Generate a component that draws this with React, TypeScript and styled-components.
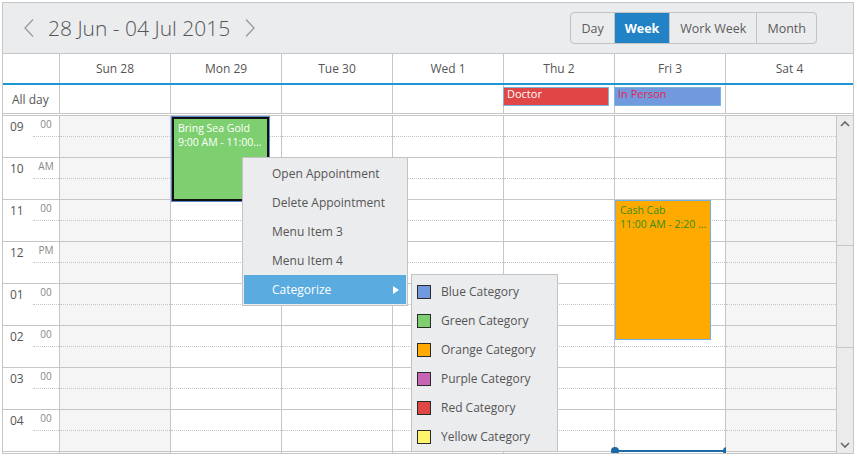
import React from "react";
import styled, { createGlobalStyle } from "styled-components";

const LINE = "#c6c6c6";
const HOUR = 42;

const GlobalStyle = createGlobalStyle`
  html, body { margin: 0; background: #fff; }
  body {
    padding: 2px;
    font-family: "Open Sans", "Noto Sans", "DejaVu Sans", sans-serif;
    color: #555;
  }
  * { box-sizing: border-box; }
`;

const Scheduler = styled.div`
  position: relative;
  width: 852px;
  height: 452px;
  border: 1px solid ${LINE};
  overflow: hidden;
  background: #fff;
`;

const Toolbar = styled.div`
  display: flex;
  align-items: center;
  height: 51px;
  padding: 0 36px 0 21px;
  background: #ebecee;
  border-bottom: 1px solid ${LINE};
`;

const NavArrow = styled.button`
  display: flex;
  align-items: center;
  justify-content: center;
  width: 10px;
  height: 18px;
  padding: 0;
  border: 0;
  background: none;
  cursor: pointer;
`;

const DateTitle = styled.h1`
  margin: 0 15px 0 14px;
  font-size: 21px;
  font-weight: 300;
  line-height: 1;
  color: #555;
`;

const ViewGroup = styled.div`
  display: flex;
  height: 32px;
  margin-left: auto;
  border: 1px solid #c3c3c3;
  border-radius: 4px;
  overflow: hidden;
`;

const ViewButton = styled.button<{ $active?: boolean }>`
  padding: 0 10px;
  border: 0;
  border-left: 1px solid #c3c3c3;
  background: ${(p) => (p.$active ? "#2182c6" : "transparent")};
  color: ${(p) => (p.$active ? "#fff" : "#5b5b5b")};
  font-family: inherit;
  font-size: 12.5px;
  font-weight: ${(p) => (p.$active ? 700 : 400)};
  cursor: pointer;

  &:first-child {
    border-left: 0;
  }
`;

const HeaderRow = styled.div`
  display: grid;
  grid-template-columns: 57px repeat(6, 111px) 1fr;
  height: 31px;
  border-bottom: 2px solid #1e96d4;
`;

const HeaderCell = styled.div`
  display: flex;
  align-items: center;
  justify-content: center;
  border-right: 1px solid ${LINE};
  font-size: 12px;
  color: #555;

  &:last-child {
    border-right: 0;
  }
`;

const AllDayRow = styled.div`
  display: grid;
  grid-template-columns: 57px repeat(6, 111px) 1fr;
  height: 29px;
  border-bottom: 1px solid ${LINE};
`;

const AllDayCell = styled.div`
  position: relative;
  border-right: 1px solid ${LINE};

  &:last-child {
    border-right: 0;
  }
`;

const AllDayLabel = styled.div`
  display: flex;
  align-items: center;
  padding-left: 9px;
  border-right: 1px solid ${LINE};
  font-size: 12px;
`;

const AllDayEvent = styled.div<{ $bg: string; $fg: string; $width: number }>`
  position: absolute;
  top: 2px;
  left: -1px;
  width: ${(p) => p.$width}px;
  height: 19px;
  padding: 0 3px;
  border: 1px solid #7ab6e3;
  background: ${(p) => p.$bg};
  color: ${(p) => p.$fg};
  font-size: 11px;
  line-height: 12px;
  white-space: nowrap;
  overflow: hidden;
`;

const Body = styled.div`
  display: grid;
  grid-template-columns: 57px repeat(7, 111px) 16px;
  height: 338px;
  margin-top: 1px;
  border-top: 1px solid ${LINE};
  overflow: hidden;
`;

const TimeColumn = styled.div`
  border-right: 1px solid ${LINE};
`;

const TimeSlot = styled.div`
  display: flex;
  height: ${HOUR}px;
  border-bottom: 1px solid ${LINE};
`;

const HourLabel = styled.span`
  width: 30px;
  padding: 3px 0 0 7px;
  font-size: 12px;
  line-height: 16px;
  color: #555;
`;

const MinorLabel = styled.span`
  flex: 1;
  align-self: flex-start;
  height: 21px;
  padding-top: 2px;
  border-bottom: 1px dotted ${LINE};
  text-align: center;
  font-size: 10px;
  line-height: 12px;
  color: #888;
`;

const DayColumn = styled.div<{ $weekend?: boolean }>`
  position: relative;
  background: ${(p) => (p.$weekend ? "#f4f5f4" : "#fff")};
  border-right: 1px solid ${LINE};
`;

const HalfSlot = styled.div<{ $dotted?: boolean }>`
  height: 21px;
  border-bottom: 1px ${(p) => (p.$dotted ? "dotted" : "solid")} ${LINE};
`;

const TimedEvent = styled.div<{ $bg: string; $fg: string; $selected?: boolean }>`
  position: absolute;
  padding: 2px 3px 2px 4px;
  background: ${(p) => p.$bg};
  color: ${(p) => p.$fg};
  border: ${(p) => (p.$selected ? "2px solid #111" : "1px solid #6fb1e2")};
  box-shadow: ${(p) => (p.$selected ? "0 0 0 1px #5b87cc" : "none")};
  font-size: 10.5px;
  line-height: 14px;
  overflow: hidden;
`;

const EventLine = styled.div`
  white-space: nowrap;
  overflow: hidden;
  text-overflow: ellipsis;
`;

const SlotMarker = styled.div`
  position: absolute;
  left: -1px;
  top: 334px;
  width: 113px;
  height: 2px;
  background: #1b6aa6;

  &::before,
  &::after {
    content: "";
    position: absolute;
    top: -3px;
    width: 8px;
    height: 8px;
    border-radius: 50%;
    background: #1b6aa6;
  }
  &::before {
    left: -3px;
  }
  &::after {
    right: -4px;
  }
`;

const ScrollBar = styled.div`
  display: flex;
  flex-direction: column;
  background: #ebebeb;
`;

const ScrollArrow = styled.div`
  display: flex;
  align-items: center;
  justify-content: center;
  height: 16px;
`;

const ScrollTrack = styled.div`
  flex: 1;
`;

const ScrollThumb = styled.div<{ $offset: number; $size: number }>`
  margin-top: ${(p) => p.$offset}px;
  height: ${(p) => p.$size}px;
  border-top: 1px solid ${LINE};
  border-bottom: 1px solid ${LINE};
`;

const ContextMenu = styled.ul`
  position: absolute;
  left: 239px;
  top: 154px;
  width: 166px;
  margin: 0;
  padding: 1px;
  list-style: none;
  background: #ebecee;
  border: 1px solid #c3c3c3;
`;

const MenuItem = styled.li<{ $active?: boolean }>`
  position: relative;
  height: 29px;
  padding-left: 28px;
  line-height: 29px;
  font-size: 12px;
  background: ${(p) => (p.$active ? "#5aabdf" : "transparent")};
  color: ${(p) => (p.$active ? "#fff" : "#555")};
`;

const SubArrow = styled.span`
  position: absolute;
  right: 7px;
  top: 11px;
  width: 0;
  height: 0;
  border-left: 6px solid #fff;
  border-top: 4px solid transparent;
  border-bottom: 4px solid transparent;
`;

const SubMenu = styled.ul`
  position: absolute;
  left: 408px;
  top: 271px;
  width: 147px;
  margin: 0;
  padding: 2px 0 0;
  list-style: none;
  background: #ebecee;
  border: 1px solid #c3c3c3;
`;

const SubItem = styled.li`
  display: flex;
  align-items: center;
  gap: 10px;
  height: 29px;
  padding-left: 5px;
  font-size: 12px;
  color: #555;
`;

const Swatch = styled.span<{ $color: string }>`
  width: 14px;
  height: 14px;
  border: 1px solid #2b2b2b;
  background: ${(p) => p.$color};
`;

const days = [
  { label: "Sun 28", weekend: true },
  { label: "Mon 29" },
  { label: "Tue 30" },
  { label: "Wed 1" },
  { label: "Thu 2" },
  { label: "Fri 3" },
  { label: "Sat 4", weekend: true },
];

const hours = [
  ["09", "00"],
  ["10", "AM"],
  ["11", "00"],
  ["12", "PM"],
  ["01", "00"],
  ["02", "00"],
  ["03", "00"],
  ["04", "00"],
];

const allDay: Record<number, { title: string; bg: string; fg: string; width: number }> = {
  4: { title: "Doctor", bg: "#e04646", fg: "#fff", width: 106 },
  5: { title: "In Person", bg: "#7199de", fg: "#ea1f4e", width: 107 },
};

const timed = [
  {
    day: 1,
    title: "Bring Sea Gold",
    time: "9:00 AM - 11:00 AM",
    start: 9,
    end: 11,
    left: 1,
    width: 97,
    bg: "#7dcf6f",
    fg: "#fff",
    selected: true,
  },
  {
    day: 5,
    title: "Cash Cab",
    time: "11:00 AM - 2:20 PM",
    start: 11,
    end: 14 + 20 / 60,
    left: 0,
    width: 96,
    bg: "#ffaa00",
    fg: "#2f8f1f",
  },
];

const categories = [
  ["Blue Category", "#7199de"],
  ["Green Category", "#7dcf6f"],
  ["Orange Category", "#ffaa00"],
  ["Purple Category", "#c864b4"],
  ["Red Category", "#e04646"],
  ["Yellow Category", "#fff36b"],
];

const Chevron = ({ dir }: { dir: "left" | "right" }) => (
  <svg width="10" height="18" viewBox="0 0 10 18">
    <polyline
      points={dir === "left" ? "9,0.5 1,9 9,17.5" : "1,0.5 9,9 1,17.5"}
      fill="none"
      stroke="#9a9a9a"
      strokeWidth="1.3"
    />
  </svg>
);

const SmallChevron = ({ up }: { up?: boolean }) => (
  <svg width="10" height="6" viewBox="0 0 10 6">
    <polyline
      points={up ? "1,5 5,1 9,5" : "1,1 5,5 9,1"}
      fill="none"
      stroke="#666"
      strokeWidth="1.6"
    />
  </svg>
);

export default function App() {
  const firstHour = 9;
  return (
    <>
      <GlobalStyle />
      <Scheduler>
        <Toolbar>
          <NavArrow aria-label="Previous">
            <Chevron dir="left" />
          </NavArrow>
          <DateTitle>28 Jun - 04 Jul 2015</DateTitle>
          <NavArrow aria-label="Next">
            <Chevron dir="right" />
          </NavArrow>
          <ViewGroup>
            <ViewButton>Day</ViewButton>
            <ViewButton $active>Week</ViewButton>
            <ViewButton>Work Week</ViewButton>
            <ViewButton>Month</ViewButton>
          </ViewGroup>
        </Toolbar>

        <HeaderRow>
          <HeaderCell />
          {days.map((d) => (
            <HeaderCell key={d.label}>{d.label}</HeaderCell>
          ))}
        </HeaderRow>

        <AllDayRow>
          <AllDayLabel>All day</AllDayLabel>
          {days.map((d, i) => (
            <AllDayCell key={d.label}>
              {allDay[i] && (
                <AllDayEvent $bg={allDay[i].bg} $fg={allDay[i].fg} $width={allDay[i].width}>
                  {allDay[i].title}
                </AllDayEvent>
              )}
            </AllDayCell>
          ))}
        </AllDayRow>

        <Body>
          <TimeColumn>
            {hours.map(([h, m]) => (
              <TimeSlot key={h}>
                <HourLabel>{h}</HourLabel>
                <MinorLabel>{m}</MinorLabel>
              </TimeSlot>
            ))}
          </TimeColumn>
          {days.map((d, i) => (
            <DayColumn key={d.label} $weekend={d.weekend}>
              {hours.map(([h]) => (
                <React.Fragment key={h}>
                  <HalfSlot $dotted />
                  <HalfSlot />
                </React.Fragment>
              ))}
              {timed
                .filter((e) => e.day === i)
                .map((e) => (
                  <TimedEvent
                    key={e.title}
                    $bg={e.bg}
                    $fg={e.fg}
                    $selected={e.selected}
                    style={{
                      top: (e.start - firstHour) * HOUR + (e.selected ? 1 : 0),
                      height: (e.end - e.start) * HOUR,
                      left: e.left,
                      width: e.width,
                    }}
                  >
                    <EventLine>{e.title}</EventLine>
                    <EventLine>{e.time}</EventLine>
                  </TimedEvent>
                ))}
              {i === 5 && <SlotMarker />}
            </DayColumn>
          ))}
          <ScrollBar>
            <ScrollArrow>
              <SmallChevron up />
            </ScrollArrow>
            <ScrollTrack>
              <ScrollThumb $offset={113} $size={103} />
            </ScrollTrack>
            <ScrollArrow>
              <SmallChevron />
            </ScrollArrow>
          </ScrollBar>
        </Body>

        <ContextMenu>
          <MenuItem>Open Appointment</MenuItem>
          <MenuItem>Delete Appointment</MenuItem>
          <MenuItem>Menu Item 3</MenuItem>
          <MenuItem>Menu Item 4</MenuItem>
          <MenuItem $active>
            Categorize
            <SubArrow />
          </MenuItem>
        </ContextMenu>

        <SubMenu>
          {categories.map(([name, color]) => (
            <SubItem key={name}>
              <Swatch $color={color} />
              {name}
            </SubItem>
          ))}
        </SubMenu>
      </Scheduler>
    </>
  );
}
